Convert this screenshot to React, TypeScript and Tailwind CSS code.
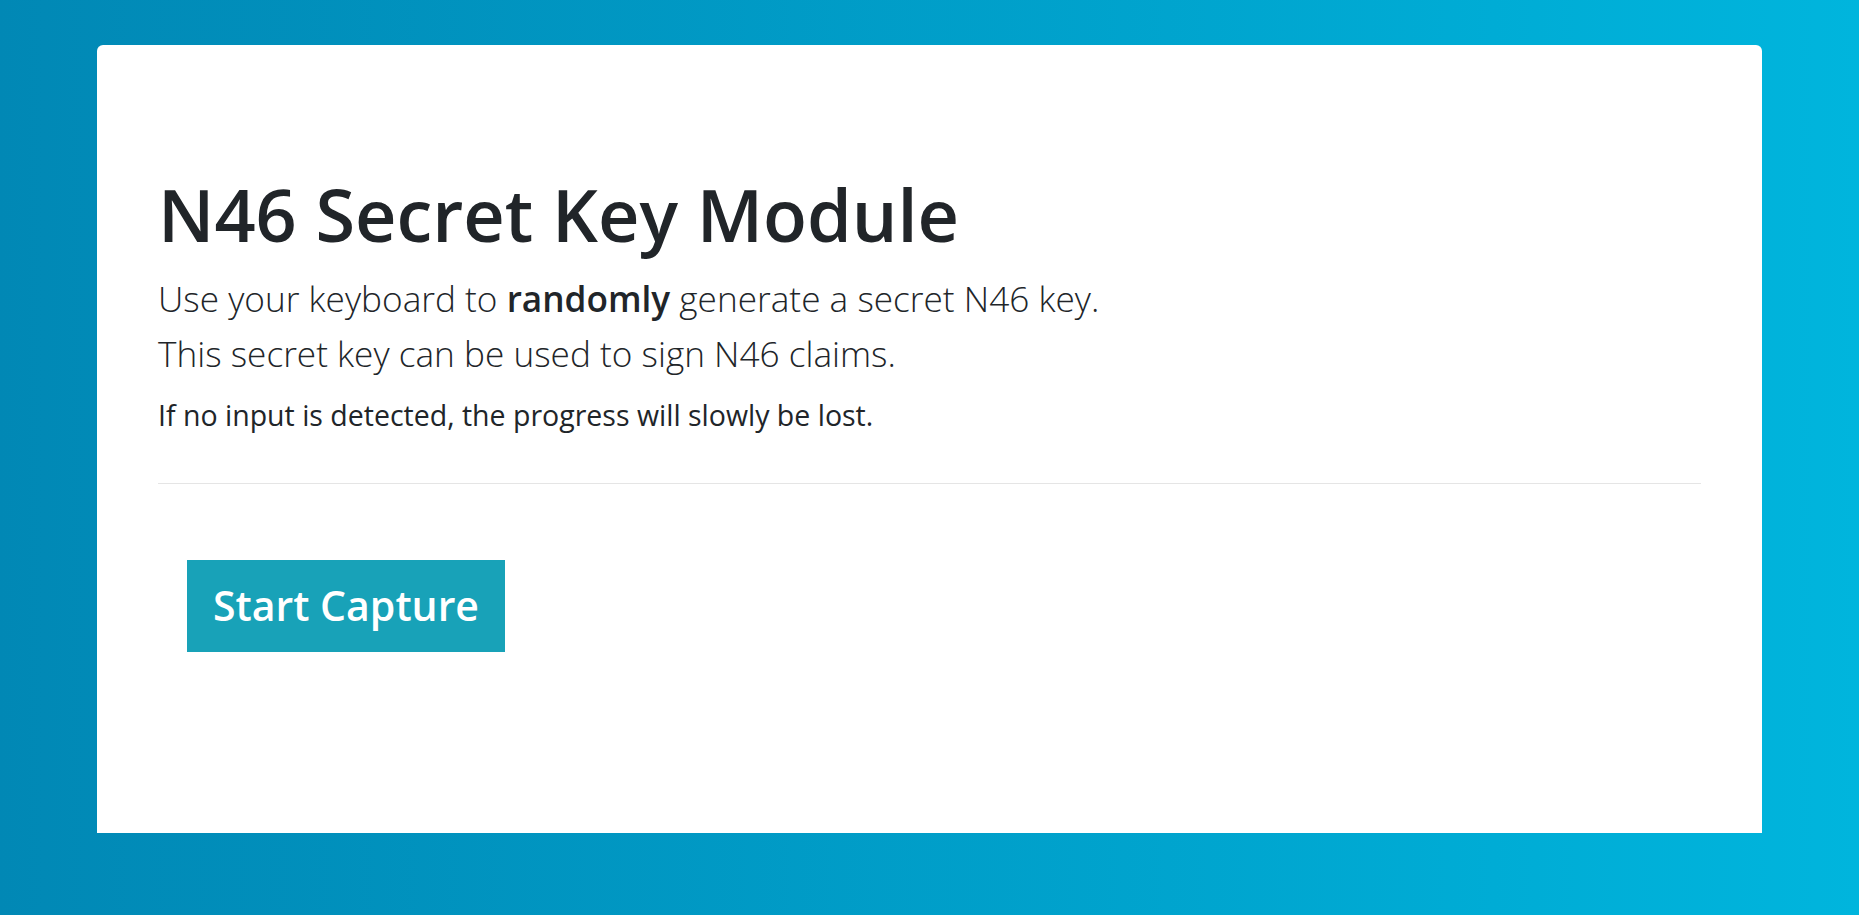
import React from "react";

export default function App() {
  return (
    <div
      className="min-h-[915px] w-full bg-linear-to-r from-[#0188b5] to-[#00b5dd] px-[97px] pt-[45px] pb-[82px]"
      style={{ fontFamily: '"Open Sans", "Noto Sans", sans-serif' }}
    >
      <div className="h-[788px] rounded-t-[6px] bg-white px-[61px] pt-[133px] text-[#212529]">
        <h1 className="text-[72px] font-semibold leading-[72px]">N46 Secret Key Module</h1>
        <div className="mt-[21px] text-[35.2px] font-light leading-[55px]">
          <p>
            Use your keyboard to <span className="font-semibold">randomly</span> generate a secret N46 key.
          </p>
          <p>This secret key can be used to sign N46 claims.</p>
        </div>
        <p className="mt-[16px] text-[28.5px] leading-[36px]">
          If no input is detected, the progress will slowly be lost.
        </p>
        <hr className="mt-[50px] border-t border-[#e5e5e5]" />
        <div className="mt-[76px] pl-[29px]">
          <button className="flex h-[92px] w-[318px] items-center justify-center bg-[#18a2b8] text-[41px] font-semibold text-white">
            Start Capture
          </button>
        </div>
      </div>
    </div>
  );
}
